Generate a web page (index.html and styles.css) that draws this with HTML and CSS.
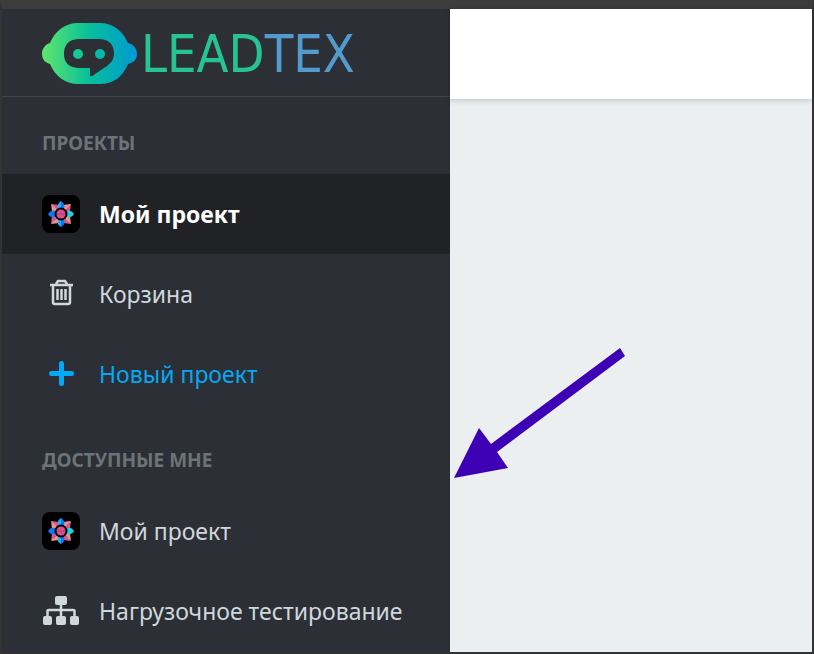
FILE: index.html
```html
<!DOCTYPE html>
<html lang="ru">
  <head>
    <meta charset="UTF-8" />
    <meta name="viewport" content="width=device-width, initial-scale=1.0" />
    <title>Leadtex</title>
    <link rel="stylesheet" href="styles.css">
  </head>
  <body>
    <svg width="0" height="0" class="sprite" aria-hidden="true">
      <defs>
        <linearGradient id="blue" x1="0" x2="1">
          <stop offset="50%" stop-color="#27a9f5" />
          <stop offset="50%" stop-color="#0878f0" />
        </linearGradient>
        <linearGradient id="pink" x1="0" x2="1">
          <stop offset="50%" stop-color="#e8938a" />
          <stop offset="50%" stop-color="#d45795" />
        </linearGradient>
        <symbol id="flower" viewBox="0 0 38 38">
          <g fill="url(#pink)">
            <path d="M19 5L23 10V14H15V10Z" transform="rotate(45 19 19)" />
            <path d="M19 5L23 10V14H15V10Z" transform="rotate(135 19 19)" />
            <path d="M19 5L23 10V14H15V10Z" transform="rotate(225 19 19)" />
            <path d="M19 5L23 10V14H15V10Z" transform="rotate(315 19 19)" />
          </g>
          <path d="M19 6Q24 9 21.500 14H16.500Q14 9 19 6Z" fill="url(#blue)" />
          <path d="M32 19Q29 14 24 16.500V21.500Q29 24 32 19Z" fill="#25cfdc" />
          <path d="M19 32Q14 29 16.500 24H21.500Q24 29 19 32Z" fill="url(#blue)" />
          <path d="M6 19Q9 14 14 16.500V21.500Q9 24 6 19Z" fill="#0b78f2" />
          <circle cx="19" cy="19" r="6.500" fill="#000" />
          <circle cx="19" cy="19" r="4.500" fill="#d94f8c" />
          <path d="M15 19H23" stroke="#b63d7d" />
        </symbol>
      </defs>
    </svg>

    <div class="app">
      <aside class="sidebar">
        <a class="logo" href="#">
          <svg class="logo-mark" viewBox="0 0 95 62" aria-hidden="true">
            <defs>
              <linearGradient id="brand" x1="0" x2="1">
                <stop offset="0" stop-color="#62e56c" />
                <stop offset="50%" stop-color="#06bf9b" />
                <stop offset="100%" stop-color="#0098d4" />
              </linearGradient>
            </defs>
            <path fill="url(#brand)" fill-rule="evenodd" d="M36 0H58C71 0 81 8 86 20C91 21 95 25 95 31S91 40 86 41C81 54 71 61 58 61H36C23 61 13 53 8 41C4 40 0 37 0 31S4 21 8 20C13 8 23 0 36 0ZM36 16Q22 17 22 31Q22 44 36 45H48V53Q50 54 53 51L65 43Q72 38 72 31Q72 17 58 16Z" />
            <circle cx="36" cy="31" r="5" fill="#17c795" />
            <circle cx="58" cy="31" r="5" fill="#08b9a8" />
          </svg>
          <span class="logo-text">LEAD<span class="logo-accent">TEX</span></span>
        </a>

        <nav>
          <h2 class="nav-title">Проекты</h2>
          <a class="nav-item active" href="#">
            <svg class="nav-icon avatar"><use href="#flower" /></svg>
            Мой проект
          </a>
          <a class="nav-item" href="#">
            <svg class="nav-icon" viewBox="0 0 38 38" fill="none" stroke="#cfd8dc" stroke-width="2">
              <path d="M8 10H31M14 9L16 6H23L25 9" stroke-width="2.500" />
              <path d="M11 11V27Q11 29 13 29H26Q28 29 28 27V11M15.500 14V25M19.500 14V25M23.500 14V25" stroke-width="2.500" />
            </svg>
            Корзина
          </a>
          <a class="nav-item create" href="#">
            <svg class="nav-icon" viewBox="0 0 38 38" stroke="#03a9f4" stroke-width="5" stroke-linecap="round">
              <path d="M19.500 8.500V28.500M9.500 18.500H29.500" />
            </svg>
            Новый проект
          </a>

          <h2 class="nav-title">Доступные мне</h2>
          <a class="nav-item" href="#">
            <svg class="nav-icon avatar"><use href="#flower" /></svg>
            Мой проект
          </a>
          <a class="nav-item" href="#">
            <svg class="nav-icon" viewBox="0 0 38 38" fill="#cfd8dc">
              <rect x="13" y="4" width="12" height="9" rx="2" />
              <rect x="1" y="24" width="9" height="9" rx="2" />
              <rect x="14" y="24" width="10" height="9" rx="2" />
              <rect x="28" y="24" width="9" height="9" rx="2" />
              <path d="M19 12V24M5.500 24V19Q5.500 18 7 18H31Q32.500 18 32.500 19V24" fill="none" stroke="#cfd8dc" stroke-width="2.500" />
            </svg>
            Нагрузочное тестирование
          </a>
        </nav>
      </aside>

      <main class="content">
        <header class="topbar"></header>
        <svg class="pointer" viewBox="0 0 172 130" aria-hidden="true">
          <path fill="#3d00b5" d="M0 130L25 80L37 96L166 0L171 8L43 104L54 120Z" />
        </svg>
      </main>
    </div>
  </body>
</html>
```
FILE: styles.css
```css
:root {
  --frame: #333333;
  --sidebar-bg: #2d2f36;
  --active-bg: #212226;
  --text-color: #cfd8dc;
  --title-color: #6b7476;
  --accent: #03a9f4;
  --content-bg: #ebeff0;
}

* {
  box-sizing: border-box;
}

body {
  margin: 0;
  font-family: "Noto Sans", sans-serif;
  background-color: var(--frame);
}

.sprite {
  position: absolute;
}

.app {
  display: flex;
  min-height: 100vh;
  border: 2px solid var(--frame);
  border-top: 9px solid #3c3c3c;
}

.sidebar {
  flex: 0 0 448px;
  background-color: var(--sidebar-bg);
}

.logo {
  display: flex;
  align-items: center;
  gap: 4px;
  height: 88px;
  padding: 2px 40px 0;
  border-bottom: 1px solid #40444d;
  text-decoration: none;
}

.logo-mark {
  width: 95px;
  height: 62px;
}

.logo-text {
  font-family: "DejaVu Sans Condensed", "DejaVu Sans", sans-serif;
  font-size: 52px;
  line-height: 64px;
  color: #27c492;
}

.logo-accent {
  color: #529bcd;
}

.nav-title {
  margin: 0;
  padding: 31px 40px 16px;
  font-size: 19px;
  line-height: 30px;
  font-weight: bold;
  text-transform: uppercase;
  color: var(--title-color);
}

.nav-item {
  display: flex;
  align-items: center;
  gap: 19px;
  height: 80px;
  padding: 0 40px;
  font-size: 23px;
  line-height: 32px;
  color: var(--text-color);
  text-decoration: none;
}

.nav-item.active {
  background-color: var(--active-bg);
  color: #ffffff;
  font-weight: bold;
}

.nav-item.create {
  color: var(--accent);
}

.nav-icon {
  flex: none;
  width: 38px;
  height: 38px;
}

.avatar {
  border-radius: 8px;
  background-color: #000000;
}

.content {
  position: relative;
  flex: 1;
  background-color: var(--content-bg);
}

.topbar {
  height: 90px;
  background-color: #ffffff;
  box-shadow: 0 1px 6px rgba(0, 0, 0, 0.2);
}

/* arrow lies over the content area */
.pointer {
  position: absolute;
  top: 339px;
  left: 4px;
  width: 172px;
  height: 130px;
}
```
